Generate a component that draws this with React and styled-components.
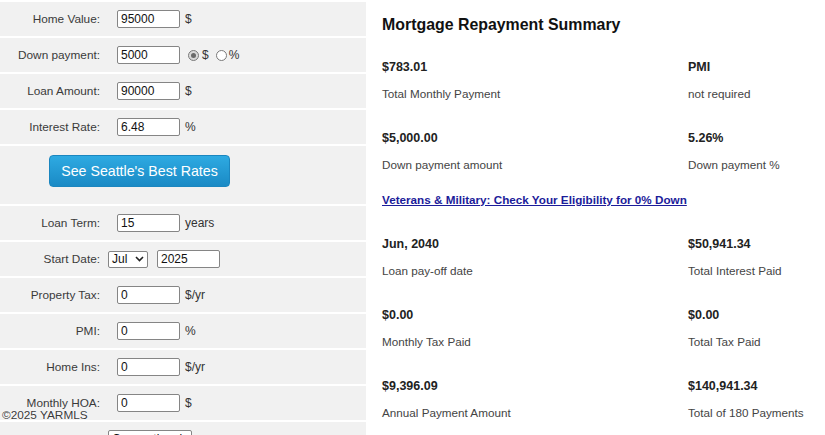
import React from 'react';
import styled, { createGlobalStyle } from 'styled-components';

const Global = createGlobalStyle`
  html, body { margin: 0; padding: 0; background: #fff; overflow: hidden; }
  body { font-family: "Liberation Sans", Arial, sans-serif; }
`;

const Page = styled.div`
  position: relative;
  display: flex;
  width: 825px;
  height: 435px;
  overflow: hidden;
`;

const Form = styled.div`
  width: 366px;
  flex: none;
  background: #f1f1f1;
`;

const Row = styled.div`
  display: flex;
  align-items: center;
  height: 34px;
  border-top: 2px solid #fff;
`;

const ButtonRow = styled.div`
  display: flex;
  align-items: flex-start;
  height: 49px;
  padding: 9px 0 0 49px;
  border-top: 2px solid #fff;
`;

const Label = styled.div`
  width: 100px;
  flex: none;
  text-align: right;
  font-size: 11.8px;
  color: #3a3a3a;
  margin-right: ${(p) => p.$gap ?? 17}px;
  white-space: nowrap;
`;

const TextInput = styled.input`
  box-sizing: border-box;
  width: ${(p) => p.$w || 63}px;
  height: 18px;
  margin: 0 0 0 ${(p) => p.$ml || 0}px;
  padding: 0 3px;
  border: 1px solid #858585;
  border-radius: 2px;
  background: #fff;
  font-family: "Liberation Sans", Arial, sans-serif;
  font-size: 12px;
  color: #111;
  outline: none;
`;

const Unit = styled.span`
  margin-left: ${(p) => p.$ml ?? 5}px;
  font-size: 12px;
  color: #333;
`;

const Radio = styled.span`
  box-sizing: border-box;
  display: inline-flex;
  align-items: center;
  justify-content: center;
  width: 11px;
  height: 11px;
  margin-left: ${(p) => p.$ml}px;
  border: 1px solid #7a7a7a;
  border-radius: 50%;
  background: ${(p) => (p.$checked ? '#d9d9d9' : '#fff')};
  &::after {
    content: '';
    display: ${(p) => (p.$checked ? 'block' : 'none')};
    width: 5px;
    height: 5px;
    border-radius: 50%;
    background: #6a6a6a;
  }
`;

const SelectBox = styled.div`
  box-sizing: border-box;
  display: flex;
  align-items: center;
  justify-content: space-between;
  width: ${(p) => p.$w}px;
  height: ${(p) => p.$h || 17}px;
  padding: 0 3px 0 3px;
  border: 1px solid #858585;
  border-radius: 2px;
  background: #fff;
  font-size: 12px;
  color: #111;
`;

const RatesButton = styled.button`
  box-sizing: border-box;
  width: 181px;
  height: 32px;
  border: 1px solid #1b86bf;
  border-radius: 4px;
  background: linear-gradient(#2eaae2, #1a8ac5);
  color: #fff;
  font-family: "Liberation Sans", Arial, sans-serif;
  font-size: 14.2px;
  cursor: pointer;
  padding: 0;
`;

const Copyright = styled.div`
  position: absolute;
  left: 2px;
  top: 408px;
  font-size: 11.8px;
  line-height: 14px;
  color: #3a3a3a;
  text-shadow: 0 0 2px #fff, 0 0 1px #fff;
`;

const Summary = styled.div`
  flex: 1;
  padding: 15px 0 0 16px;
  background: #fff;
`;

const Title = styled.h2`
  margin: 0 0 24px;
  font-size: 15.9px;
  line-height: 20px;
  font-weight: bold;
  color: #111;
`;

const Grid = styled.div`
  display: grid;
  grid-template-columns: 306px 1fr;
  row-gap: 28px;
`;

const Value = styled.div`
  font-size: 12.5px;
  line-height: 16px;
  font-weight: bold;
  color: #222;
  margin-bottom: 11px;
`;

const Caption = styled.div`
  font-size: 11.7px;
  line-height: 16px;
  color: #444;
`;

const VaLink = styled.a`
  display: block;
  margin: 19px 0 28px;
  font-size: 11.7px;
  line-height: 16px;
  font-weight: bold;
  color: #1c1c9a;
  text-decoration: underline;
`;

const Chevron = () => (
  <svg width="9" height="6" viewBox="0 0 9 6">
    <path d="M1 1 L4.5 4.5 L8 1" fill="none" stroke="#222" strokeWidth="1.6" />
  </svg>
);

const Field = ({ label, value, unit }) => (
  <Row>
    <Label>{label}</Label>
    <TextInput defaultValue={value} readOnly />
    <Unit>{unit}</Unit>
  </Row>
);

const Stat = ({ value, caption }) => (
  <div>
    <Value>{value}</Value>
    <Caption>{caption}</Caption>
  </div>
);

export default function App() {
  return (
    <>
      <Global />
      <Page>
        <Form>
          <Field label="Home Value:" value="95000" unit="$" />
          <Row>
            <Label>Down payment:</Label>
            <TextInput defaultValue="5000" readOnly />
            <Radio $ml={8} $checked />
            <Unit $ml={3}>$</Unit>
            <Radio $ml={7} />
            <Unit $ml={2}>%</Unit>
          </Row>
          <Field label="Loan Amount:" value="90000" unit="$" />
          <Field label="Interest Rate:" value="6.48" unit="%" />
          <ButtonRow>
            <RatesButton>See Seattle's Best Rates</RatesButton>
          </ButtonRow>
          <Field label="Loan Term:" value="15" unit="years" />
          <Row>
            <Label $gap={8}>Start Date:</Label>
            <SelectBox $w={40} $h={17}>
              <span>Jul</span>
              <Chevron />
            </SelectBox>
            <TextInput $ml={9} defaultValue="2025" readOnly />
          </Row>
          <Field label="Property Tax:" value="0" unit="$/yr" />
          <Field label="PMI:" value="0" unit="%" />
          <Field label="Home Ins:" value="0" unit="$/yr" />
          <Field label="Monthly HOA:" value="0" unit="$" />
          <Row>
            <Label $gap={8}>Loan Type:</Label>
            <SelectBox $w={84} $h={18}>
              <span>Conventional</span>
              <Chevron />
            </SelectBox>
          </Row>
        </Form>
        <Summary>
          <Title>Mortgage Repayment Summary</Title>
          <Grid>
            <Stat value="$783.01" caption="Total Monthly Payment" />
            <Stat value="PMI" caption="not required" />
            <Stat value="$5,000.00" caption="Down payment amount" />
            <Stat value="5.26%" caption="Down payment %" />
          </Grid>
          <VaLink href="#">Veterans &amp; Military: Check Your Eligibility for 0% Down</VaLink>
          <Grid>
            <Stat value="Jun, 2040" caption="Loan pay-off date" />
            <Stat value="$50,941.34" caption="Total Interest Paid" />
            <Stat value="$0.00" caption="Monthly Tax Paid" />
            <Stat value="$0.00" caption="Total Tax Paid" />
            <Stat value="$9,396.09" caption="Annual Payment Amount" />
            <Stat value="$140,941.34" caption="Total of 180 Payments" />
          </Grid>
        </Summary>
        <Copyright>©2025 YARMLS</Copyright>
      </Page>
    </>
  );
}
